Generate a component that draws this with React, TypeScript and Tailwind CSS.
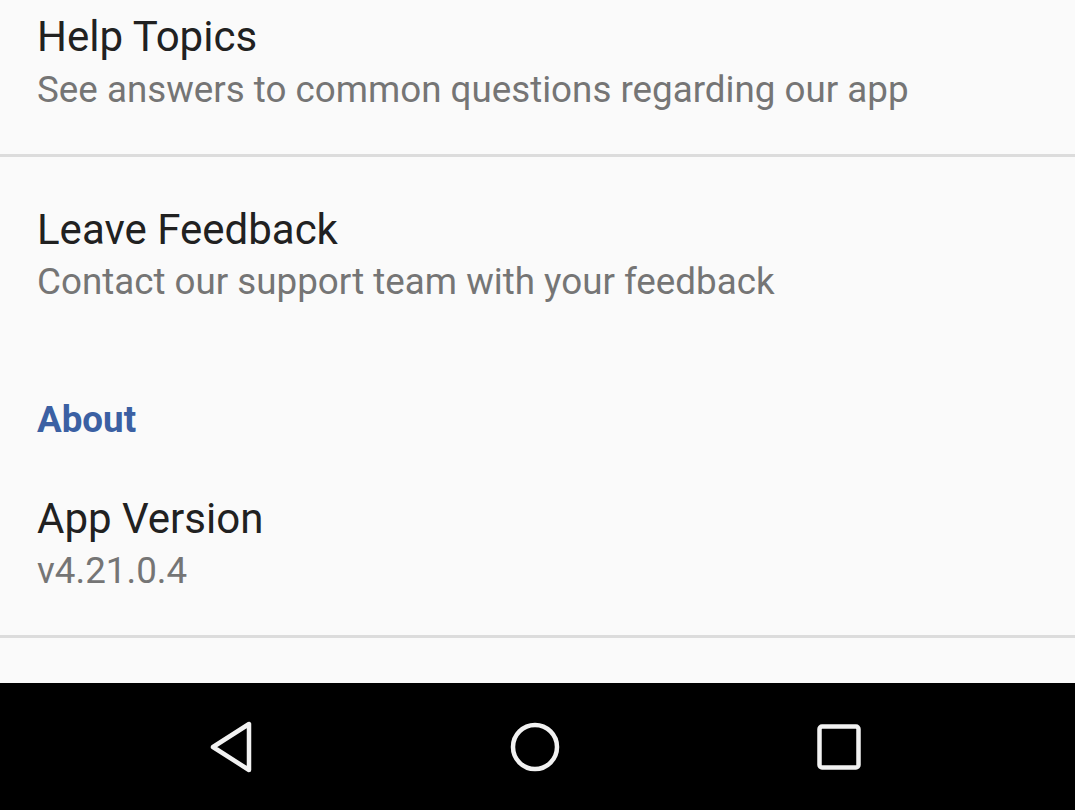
import type { ReactNode } from 'react';

const font = { fontFamily: 'Roboto, "Noto Sans", sans-serif' };

function Divider() {
  return <div className="h-[3px] bg-[#dcdcdc]" />;
}

function PrefTitle({ children }: { children: ReactNode }) {
  return <div className="text-[42px] leading-[48px] text-[#212121]">{children}</div>;
}

function PrefSummary({ children, className = '' }: { children: ReactNode; className?: string }) {
  return <div className={`text-[36.75px] leading-[42px] text-[#757575] ${className}`}>{children}</div>;
}

// Android nav bar buttons, drawn to match the stock outline style
function BackIcon() {
  return (
    <svg width="56" height="56" viewBox="0 0 56 56" fill="none">
      <path d="M10 28 L46 5 L46 51 Z" stroke="#f2f2f2" strokeWidth="4.5" strokeLinejoin="round" />
    </svg>
  );
}

function HomeIcon() {
  return (
    <svg width="56" height="56" viewBox="0 0 56 56" fill="none">
      <circle cx="28" cy="28" r="22" stroke="#f2f2f2" strokeWidth="4.5" />
    </svg>
  );
}

function RecentsIcon() {
  return (
    <svg width="56" height="56" viewBox="0 0 56 56" fill="none">
      <rect x="8.5" y="7.5" width="39" height="41" rx="2.5" stroke="#f2f2f2" strokeWidth="4.5" />
    </svg>
  );
}

export default function App() {
  return (
    <div className="flex h-[810px] w-full flex-col overflow-hidden bg-[#fafafa]" style={font}>
      <div className="flex flex-1 flex-col">
        <div className="px-[37px] pt-[13px] pb-[43px]">
          <PrefTitle>Help Topics</PrefTitle>
          <PrefSummary className="mt-[8px]">See answers to common questions regarding our app</PrefSummary>
        </div>
        <Divider />
        <div className="px-[37px] pt-[49px]">
          <PrefTitle>Leave Feedback</PrefTitle>
          <PrefSummary className="mt-[7px]">Contact our support team with your feedback</PrefSummary>
        </div>
        <div className="mt-[96px] px-[37px] text-[36.75px] font-bold leading-[42px] text-[#3b60a3]">About</div>
        <div className="mt-[54px] px-[37px] pb-[43px]">
          <PrefTitle>App Version</PrefTitle>
          <PrefSummary className="mt-[7px]">v4.21.0.4</PrefSummary>
        </div>
        <Divider />
        <div className="flex-1" />
      </div>
      <nav className="flex h-[127px] items-center justify-center bg-black pr-[5px]">
        <button className="flex w-[304px] justify-center">
          <BackIcon />
        </button>
        <button className="flex w-[304px] justify-center">
          <HomeIcon />
        </button>
        <button className="flex w-[304px] justify-center">
          <RecentsIcon />
        </button>
      </nav>
    </div>
  );
}
